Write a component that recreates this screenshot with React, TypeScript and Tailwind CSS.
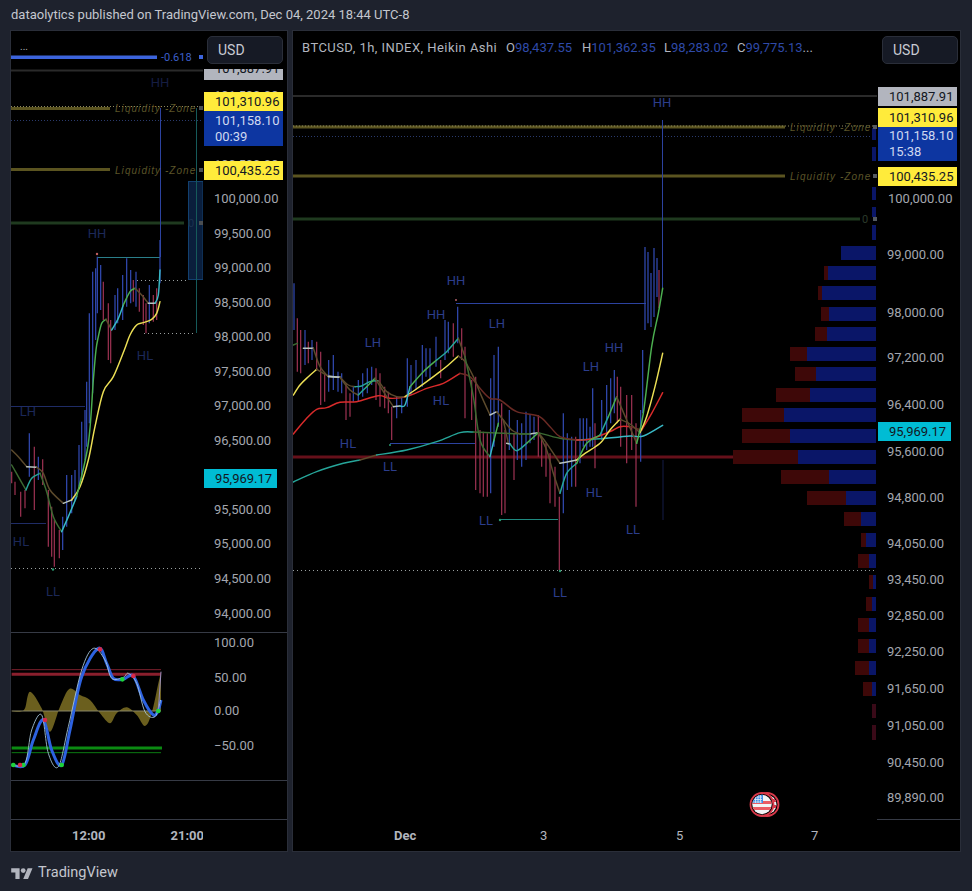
import React from "react";

const B = "#3048ae";
const R = "#97304f";
type Bar = [number, number, number, string];

const rightBars: Bar[] = [
  [12,10,150,B],[22,115,275,R],[32,150,280,R],[45,150,255,B],[55,185,250,R],[66,180,240,B],[80,185,270,R],[92,215,375,R],[104,280,365,R],[116,240,335,B],[130,225,330,B],[144,275,335,B],[155,280,340,B],[168,310,420,R],[180,340,410,R],[190,320,365,B],[205,300,365,B],[218,280,350,B],[232,265,340,B],[245,260,315,B],[258,265,360,R],[270,280,380,R],[284,320,385,R],[295,335,400,R],[305,380,480,R],[320,350,415,B],[335,350,400,B],[352,235,380,B],[363,255,345,B],[378,240,330,B],[397,195,320,B],[408,205,290,B],[420,205,300,B],[438,170,260,B],[452,240,295,R],[465,120,240,B],[475,125,220,B],[490,130,230,R],[503,80,190,B],[515,145,240,R],[525,200,415,R],[545,300,420,R],[557,290,630,R],[570,450,640,R],[580,455,650,R],[592,460,650,R],[602,295,640,B],[612,225,500,B],[625,200,440,B],[635,370,705,R],[645,450,700,R],[658,390,510,B],[672,460,600,R],[682,420,540,B],[695,430,560,B],[708,395,540,B],[720,405,490,B],[732,410,480,B],[745,405,530,R],[755,470,560,R],[768,490,590,R],[780,520,670,R],[795,560,680,R],[808,650,870,R],[820,400,700,B],[832,460,630,B],[845,470,620,B],[857,470,620,R],[870,415,550,B],[880,415,500,B],[890,415,510,B],[900,440,500,B],[908,325,500,B],[915,430,565,R],[935,360,480,B],[950,315,460,B],[962,295,430,B],[973,270,400,B],[982,290,430,R],[992,320,500,R],[1010,345,550,R],[1025,345,510,R],[1038,430,680,R],[1052,390,545,B],[1058,210,400,B],[1065,-99,150,B],[1074,-84,130,B],[1083,-21,141,B],[1092,-96,111,B],[1101,-66,51,B],[1107,-30,84,R],
];

const leftBars: Bar[] = [
  [35,1415,1450,R],[45,1445,1485,R],[62,1475,1550,R],[75,1470,1525,R],[88,1300,1430,B],[103,1340,1530,R],[115,1370,1440,B],[128,1378,1455,R],[145,1470,1640,R],[155,1520,1670,R],[163,1560,1700,R],[178,1590,1675,R],[188,1550,1650,B],[200,1425,1580,B],[215,1425,1540,B],[225,1410,1500,B],[237,1335,1460,B],[245,1265,1440,B],[255,1230,1380,B],[260,1145,1340,B],
  [268,940,1270,B],[278,815,1180,B],[287,805,1020,B],[292,770,940,B],[302,795,930,B],[310,845,960,R],[325,910,1080,R],[332,960,1090,R],[345,885,990,B],[353,865,970,B],[368,825,960,B],[380,775,920,B],[392,810,910,B],[400,840,905,R],[408,815,920,B],[418,865,935,R],[430,885,975,R],[438,910,1000,R],[448,855,970,B],[460,885,965,R],[470,865,960,R],[480,720,850,B],
];

const GREEN = "#4caf50", TEAL = "#26a69a", CYAN = "#39b9c6", YEL = "#ecdf55", BRN = "#5c4a2c", WHT = "#b8c4c0", RED = "#d92b2b", DRED = "#6a2a24", DGRN = "#3c6a32";

type Seg = [string, string];
const rightLines: Seg[] = [
  [TEAL, "10,606 80,575 160,550 210,540"],
  [BRN, "210,540 260,525"],
  [TEAL, "260,525 350,510 440,485 510,458 550,456"],
  [DGRN, "550,456 640,460 720,462"],
  [WHT, "720,462 745,458"],
  [DGRN, "745,458 810,475 860,480"],
  [TEAL, "860,480 950,475"],
  [CYAN, "950,475 1020,468 1060,468 1118,436"],

  [RED, "10,462 50,415 80,388 110,383 150,367 200,365 265,347 300,355 350,350 410,325 460,310 510,280"],
  [DRED, "510,280 540,290 570,325 600,355 630,360 680,395 745,408 780,440 810,470 860,480"],
  [RED, "860,480 900,478 960,455 990,440 1020,440"],
  [DRED, "1020,440 1055,450"],
  [RED, "1055,450 1085,400 1118,338"],

  [YEL, "10,345 30,315 55,290 80,268"],
  [BRN, "80,268 100,280 115,288"],
  [WHT, "115,288 150,292"],
  [BRN, "150,292 175,315 195,320"],
  [TEAL, "195,320 215,318 240,305 265,302"],
  [BRN, "265,302 290,335 320,350 345,350"],
  [YEL, "345,350 375,330 410,305 450,275 475,255 505,228"],
  [BRN, "505,228 525,245 550,290 575,350 600,405"],
  [WHT, "600,405 620,395"],
  [BRN, "620,395 640,420 665,450 690,462"],
  [DGRN, "690,462 720,462"],
  [BRN, "745,458 770,490 810,550"],
  [WHT, "810,550 860,540"],
  [YEL, "860,540 885,520 930,490 960,450 990,418"],
  [BRN, "990,418 1020,432 1050,458"],
  [YEL, "1050,458 1070,410 1095,320 1118,220"],

  [DGRN, "10,195 22,190"],
  [WHT, "40,205 70,205"],
  [BRN, "70,205 90,260 115,290"],
  [WHT, "115,290 150,292"],
  [BRN, "150,292 180,330 205,345"],
  [TEAL, "205,345 230,320"],
  [GREEN, "230,320 255,295"],
  [BRN, "255,295 290,350 310,380"],
  [WHT, "310,380 330,378"],
  [CYAN, "330,378 345,375 360,320"],
  [GREEN, "360,320 400,275 440,240"],
  [TEAL, "440,240 470,215 505,175"],
  [BRN, "505,175 525,230"],
  [DGRN, "525,230 550,350 570,480 600,530"],
  [CYAN, "600,530 612,480"],
  [GREEN, "612,480 625,430"],
  [BRN, "640,420 655,490"],
  [WHT, "650,490 660,492"],
  [TEAL, "660,492 680,512 710,490"],
  [GREEN, "710,490 745,458"],
  [BRN, "745,458 770,510 790,580 810,640"],
  [TEAL, "810,640 830,580 860,550"],
  [GREEN, "860,550 890,490 930,465"],
  [TEAL, "930,465 955,410"],
  [GREEN, "955,410 980,350"],
  [BRN, "980,350 1010,420 1040,490"],
  [GREEN, "1040,490 1060,400 1085,200 1105,100 1118,25"],
];

const leftLines: Seg[] = [
  [BRN, "35,1350 55,1370 80,1400"],
  [WHT, "80,1400 110,1402"],
  [BRN, "110,1402 130,1420 150,1470 190,1510"],
  [WHT, "190,1510 215,1500"],
  [YEL, "215,1500 240,1460 265,1380 285,1280 310,1175 340,1130 373,1050 390,1005 410,975 430,968 455,958 470,940 480,905"],

  [DGRN, "35,1395 55,1430 78,1470"],
  [TEAL, "78,1470 95,1435 120,1420"],
  [DGRN, "120,1420 140,1475 160,1550 185,1595"],
  [CYAN, "185,1595 205,1550 230,1490"],
  [GREEN, "230,1490 265,1330 280,1140 288,1050 295,1010 305,970 318,958"],
  [BRN, "318,958 335,990"],
  [CYAN, "335,990 355,955 370,915"],
  [GREEN, "370,915 390,875 405,865"],
  [BRN, "405,865 425,885 445,910"],
  [WHT, "445,910 465,910"],
  [CYAN, "465,910 475,885 480,810"],
];

// Catmull-Rom curve through a list of "x,y x,y" points, so the moving averages read as curves.
function smooth(points: string): string {
  const p = points.split(" ").map((s) => s.split(",").map(Number));
  let d = `M${p[0][0]} ${p[0][1]}`;
  for (let i = 0; i < p.length - 1; i++) {
    const a = p[Math.max(0, i - 1)], b = p[i], c = p[i + 1], e = p[Math.min(p.length - 1, i + 2)];
    const c1x = b[0] + (c[0] - a[0]) / 6, c1y = b[1] + (c[1] - a[1]) / 6;
    const c2x = c[0] - (e[0] - b[0]) / 6, c2y = c[1] - (e[1] - b[1]) / 6;
    d += `C${c1x} ${c1y} ${c2x} ${c2y} ${c[0]} ${c[1]}`;
  }
  return d;
}

function Bars({ data }: { data: Bar[] }) {
  return (
    <>
      {data.map(([x, t, b, c], i) => (
        <line key={i} x1={x} x2={x} y1={t} y2={b} stroke={c} strokeWidth={3.8} />
      ))}
    </>
  );
}

function Lines({ data }: { data: Seg[] }) {
  return (
    <>
      {data.map(([c, p], i) => (
        <path key={i} d={smooth(p)} fill="none" stroke={c} strokeWidth={4.4} strokeLinejoin="round" strokeLinecap="round" />
      ))}
    </>
  );
}

function ChartLabel({ x, y, t, c = "#2c3d8c" }: { x: number; y: number; t: string; c?: string }) {
  return (
    <text x={x} y={y} textAnchor="middle" dominantBaseline="central" fill={c} fontSize={13}>
      {t}
    </text>
  );
}

function ZoneText({ x, y, c = "#5b5428" }: { x: number; y: number; c?: string }) {
  return (
    <text x={x} y={y} dominantBaseline="central" fill={c} fontSize={10} fontStyle="italic" letterSpacing={1.05} fontFamily="'Liberation Sans', sans-serif">
      Liquidity -Zone
    </text>
  );
}

function Tick({ y, t, x = 10 }: { y: number; t: string; x?: number }) {
  return (
    <div className="absolute whitespace-nowrap text-[13px] leading-[16px] text-[#a3a6ae]" style={{ top: y - 8, left: x }}>
      {t}
    </div>
  );
}

function Badge({ y, h, w = "w-[79px]", bg, fg = "text-[#131722]", lines }: { y: number; h: number; w?: string; bg: string; fg?: string; lines: string[] }) {
  return (
    <div className={`absolute left-[1px] flex flex-col justify-center pl-[11px] text-[13px] leading-[16px] ${w} ${bg} ${fg}`} style={{ top: y, height: h }}>
      {lines.map((l) => (
        <span key={l}>{l}</span>
      ))}
    </div>
  );
}

function UsdButton({ left }: { left: number }) {
  return (
    <div className="absolute top-[5px] flex h-[28px] w-[76px] items-center rounded-[5px] border border-[#2a2e39] bg-[#161a25] pl-[10px] text-[14px] text-[#c8cbd3]" style={{ left }}>
      USD
    </div>
  );
}

const profile: [number, number, number][] = [
  [246, 841, 841],[266, 824, 828],[286, 818, 822],[307, 821, 829],[327, 815, 827],[347, 790, 807],[367, 795, 816],[388, 776, 810],[408, 742, 784],[429, 742, 790],[450, 733, 798],[470, 781, 829],[491, 807, 846],[512, 844, 861],[533, 861, 866],[554, 858, 869],[575, 869, 873],[597, 866, 872],[618, 858, 869],[639, 858, 869],[661, 855, 869],[682, 863, 872],
];

function RightPlot() {
  return (
    <svg className="block h-[788px] w-[584px]" viewBox="293 31 584 788" fontFamily="Roboto, sans-serif">
      <line x1={293} x2={877} y1={96} y2={96} stroke="#2a2a2a" strokeWidth={2} />
      <line x1={293} x2={785} y1={127} y2={127} stroke="#5b5420" strokeWidth={3} />
      <line x1={293} x2={877} y1={126} y2={126} stroke="#8e8a60" strokeWidth={1} strokeDasharray="1 2" />
      <line x1={293} x2={877} y1={136.5} y2={136.5} stroke="#2a3a6c" strokeWidth={1} strokeDasharray="1 2" />
      <line x1={293} x2={785} y1={176} y2={176} stroke="#5b5420" strokeWidth={3} />
      <line x1={293} x2={860} y1={219} y2={219} stroke="#1f3a1f" strokeWidth={3} />
      <line x1={293} x2={733} y1={457} y2={457} stroke="#66101a" strokeWidth={3} />
      <line x1={293} x2={877} y1={570.5} y2={570.5} stroke="#9aa0a0" strokeWidth={1} strokeDasharray="1 3" />

      <line x1={456} x2={646} y1={303.5} y2={303.5} stroke="#2c429f" strokeWidth={1} />
      <line x1={390} x2={475} y1={443.5} y2={443.5} stroke="#2c429f" strokeWidth={1} />
      <line x1={500} x2={558} y1={519.5} y2={519.5} stroke="#1f8a80" strokeWidth={1} />
      <line x1={662.5} x2={662.5} y1={120} y2={288} stroke="#2c429f" strokeWidth={1} />
      <line x1={663} x2={663} y1={460} y2={520} stroke="#141c48" strokeWidth={1} />

      <ZoneText x={790} y={127} />
      <ZoneText x={790} y={176} />
      <text x={865} y={219} textAnchor="middle" dominantBaseline="central" fill="#2b3a2b" fontSize={11}>0</text>

      {[[128,140],[147,161],[187,200],[207,217],[225,240]].map(([a, b]) => (
        <rect key={a} x={872} y={a} width={4} height={b - a} fill="#0a1668" />
      ))}
      {[127, 176, 219].map((y) => (
        <rect key={y} x={873} y={y - 2} width={4} height={4} fill="#555a60" />
      ))}

      {profile.map(([y, r, s]) => (
        <g key={y}>
          <rect x={r} y={y} width={s - r} height={14} fill="#3e0808" />
          <rect x={s} y={y} width={876 - s} height={14} fill="#0a1668" />
        </g>
      ))}
      <rect x={872} y={704} width={4} height={14} fill="#3a0a18" />
      <rect x={872} y={725} width={4} height={15} fill="#3a0a18" />

      <g transform="translate(290 280) scale(0.33333)">
        <Bars data={rightBars} />
        <Lines data={rightLines} />
      </g>

      <circle cx={456} cy={300} r={1} fill="#b0606a" />
      <circle cx={390} cy={445} r={1} fill="#2a9a70" />
      <circle cx={500} cy={520} r={1.2} fill="#2a9a70" />
      <circle cx={560} cy={571} r={1.2} fill="#2a9a70" />

      <ChartLabel x={662} y={102} t="HH" />
      <ChartLabel x={456} y={280} t="HH" />
      <ChartLabel x={436} y={314} t="HH" />
      <ChartLabel x={497} y={323} t="LH" />
      <ChartLabel x={373} y={342} t="LH" />
      <ChartLabel x={591} y={366} t="LH" />
      <ChartLabel x={614} y={347} t="HH" />
      <ChartLabel x={441} y={400} t="HL" />
      <ChartLabel x={348} y={443} t="HL" />
      <ChartLabel x={390} y={466} t="LL" />
      <ChartLabel x={594} y={492} t="HL" />
      <ChartLabel x={486} y={520} t="LL" />
      <ChartLabel x={633} y={529} t="LL" />
      <ChartLabel x={560} y={592} t="LL" />

      <g>
        <circle cx={767} cy={804.5} r={11.5} fill="#000" stroke="#d9394a" strokeWidth={1.8} />
        <clipPath id="flagBack"><circle cx={767} cy={804.5} r={9.5} /></clipPath>
        <g clipPath="url(#flagBack)">
          <rect x={770} y={795} width={7} height={19} fill="#eef0f2" />
          <rect x={772} y={799} width={5} height={3} fill="#d9394a" />
          <rect x={772} y={805} width={5} height={3} fill="#d9394a" />
        </g>
        <circle cx={762} cy={804.5} r={11.5} fill="#000" stroke="#d9394a" strokeWidth={1.8} />
        <clipPath id="flagClip"><circle cx={762} cy={804.5} r={9.7} /></clipPath>
        <g clipPath="url(#flagClip)">
          <rect x={752} y={794} width={20} height={21} fill="#f2f4f6" />
          <rect x={752} y={801} width={20} height={3} fill="#ea5b64" />
          <rect x={752} y={807} width={20} height={3} fill="#ea5b64" />
          <rect x={752} y={794} width={11} height={9} fill="#3d8ee6" />
          <path d="M753 797h9M753 799.5h9M753 802h9M755.5 795v8M758 795v8M760.5 795v8" stroke="#dfeaf6" strokeWidth={0.8} />
        </g>
      </g>
    </svg>
  );
}

function LeftPlot() {
  return (
    <svg className="block h-[601px] w-[192px]" viewBox="11 31 192 601" fontFamily="Roboto, sans-serif">
      <rect x={11} y={55.5} width={146} height={3.5} fill="#3c64dc" />
      <text x={161} y={57} dominantBaseline="central" fill="#3c5fc8" fontSize={11}>-0.618</text>
      <rect x={199} y={55} width={4} height={4} fill="#3c64dc" />
      <text x={20} y={50} fill="#b0b3ba" fontSize={10}>...</text>

      <line x1={11} x2={203} y1={70.5} y2={70.5} stroke="#2a2a2a" strokeWidth={2} />
      <line x1={11} x2={110} y1={108.5} y2={108.5} stroke="#5b5420" strokeWidth={3} />
      <line x1={11} x2={203} y1={106.5} y2={106.5} stroke="#8e8a60" strokeWidth={1} strokeDasharray="1 2" />
      <line x1={11} x2={203} y1={120.5} y2={120.5} stroke="#2a3a6c" strokeWidth={1} strokeDasharray="1 2" />
      <line x1={11} x2={110} y1={169.5} y2={169.5} stroke="#5b5420" strokeWidth={3} />
      <line x1={11} x2={184} y1={223} y2={223} stroke="#1f3a1f" strokeWidth={3} />
      <line x1={11} x2={203} y1={568.5} y2={568.5} stroke="#9aa0a0" strokeWidth={1} strokeDasharray="1 3" />

      <rect x={188.5} y={181.5} width={14.5} height={98} fill="#0a1e3c" stroke="#12406f" strokeWidth={1} />
      <line x1={196.5} x2={196.5} y1={108} y2={333} stroke="#155a5a" strokeWidth={1} />
      <line x1={144} x2={196} y1={333.5} y2={333.5} stroke="#9aa0a0" strokeDasharray="1 3" />
      <line x1={137} x2={188} y1={280.5} y2={280.5} stroke="#9aa0a0" strokeDasharray="1 3" />
      <line x1={160.5} x2={160.5} y1={108} y2={257} stroke="#2c429f" strokeWidth={1} />
      <line x1={97} x2={160} y1={257.5} y2={257.5} stroke="#2a7f8a" strokeWidth={1} />
      <line x1={11} x2={85} y1={406.5} y2={406.5} stroke="#1f2c66" strokeWidth={1} />
      <line x1={11} x2={46} y1={523.5} y2={523.5} stroke="#1f2c66" strokeWidth={1} />

      <ZoneText x={115} y={108} />
      <ZoneText x={115} y={170} />
      <text x={191} y={223} textAnchor="middle" dominantBaseline="central" fill="#1c3350" fontSize={11}>0</text>
      {[108, 170, 223].map((y) => (
        <rect key={y} x={199} y={y - 2} width={4} height={4} fill="#4a4e52" />
      ))}

      <g transform="scale(0.33333)">
        <Bars data={leftBars} />
        <Lines data={leftLines} />
      </g>

      <circle cx={97} cy={254} r={1.2} fill="#c06060" />
      <circle cx={53} cy={569.5} r={1.2} fill="#2a9a70" />

      <ChartLabel x={160} y={82} t="HH" c="#151d42" />
      <ChartLabel x={97} y={233} t="HH" c="#1c2858" />
      <ChartLabel x={28} y={411} t="LH" c="#1c2858" />
      <ChartLabel x={21} y={541} t="HL" c="#1c2858" />
      <ChartLabel x={53} y={591} t="LL" c="#1c2858" />
      <ChartLabel x={145} y={355} t="HL" c="#1c2858" />
    </svg>
  );
}

function OscPlot() {
  return (
    <svg className="block h-[148px] w-[192px]" viewBox="11 633 192 148">
      <g transform="translate(0 600) scale(0.33333)">
        <path d={smooth("35,333 60,335 75,325 90,275 125,325 150,395 180,320 208,267 240,285 270,300 300,340 330,370 350,340 380,322 410,345 435,378 455,340 475,250 483,215") + "L483 333Z"} fill="#6b5f1e" />
        <line x1={35} x2={483} y1={333} y2={333} stroke="#8a8868" strokeWidth={3} />
        <line x1={35} x2={483} y1={209} y2={209} stroke="#7c1f2c" strokeWidth={3} />
        <line x1={35} x2={483} y1={223} y2={223} stroke="#8a1f2d" strokeWidth={9} />
        <line x1={35} x2={486} y1={444} y2={444} stroke="#0b8a12" strokeWidth={9} />
        <line x1={35} x2={483} y1={458} y2={458} stroke="#0b7a12" strokeWidth={3} />
        <path d={smooth("35,495 75,495 100,420 130,360 155,450 185,495 210,390 245,230 295,145 320,190 340,235 370,238 400,228 430,300 460,345 475,330 483,300")} fill="none" stroke="#2d62e0" strokeWidth={9} strokeLinejoin="round" />
        <path d={smooth("35,495 75,490 95,390 125,345 145,460 175,500 205,380 245,210 280,145 315,180 335,235 370,232 385,220 410,250 435,335 465,350 482,300")} fill="none" stroke="#a8c8dc" strokeWidth={2.6} strokeLinejoin="round" />
        <line x1={475} x2={483} y1={330} y2={215} stroke="#9a8ec0" strokeWidth={3} />
        {[[40,495],[70,495],[185,495],[367,238],[475,333]].map(([x, y]) => (
          <circle key={x} cx={x} cy={y} r={7} fill="#1ed33a" />
        ))}
        {[[60,495],[135,360],[300,148],[400,228]].map(([x, y]) => (
          <circle key={x} cx={x} cy={y} r={7} fill="#d6294a" />
        ))}
      </g>
    </svg>
  );
}

const leftTicks: [number, string][] = [
  [199,"100,000.00"],[234,"99,500.00"],[268,"99,000.00"],[303,"98,500.00"],[337,"98,000.00"],[372,"97,500.00"],[406,"97,000.00"],[441,"96,500.00"],[510,"95,500.00"],[544,"95,000.00"],[579,"94,500.00"],[614,"94,000.00"],
];
const rightTicks: [number, string][] = [
  [199,"100,000.00"],[255,"99,000.00"],[313,"98,000.00"],[358,"97,200.00"],[405,"96,400.00"],[452,"95,600.00"],[498,"94,800.00"],[544,"94,050.00"],[580,"93,450.00"],[616,"92,850.00"],[652,"92,250.00"],[689,"91,650.00"],[726,"91,050.00"],[763,"90,450.00"],[798,"89,890.00"],
];

export default function App() {
  return (
    <div className="flex h-[891px] w-[972px] flex-col bg-[#1e222d] font-['Roboto',sans-serif]">
      <div className="flex h-[30px] items-center pl-[11px] text-[13px] text-[#c4c7cf]">
        dataolytics published on TradingView.com, Dec 04, 2024 18:44 UTC-8
      </div>

      <div className="flex h-[822px] gap-[4px] pl-[10px]">
        {/* left chart */}
        <div className="flex w-[278px] flex-col border border-[#2a2e39] bg-black">
          <div className="flex h-[601px]">
            <LeftPlot />
            <div className="relative w-[84px] overflow-hidden">
              <Tick y={96 - 31} x={11} t="101,500.00" />
              <Tick y={165 - 31} x={11} t="100,500.00" />
              {leftTicks.map(([y, t]) => (
                <Tick key={t} y={y - 31} x={11} t={t} />
              ))}
              <UsdButton left={4} />
              <div className="absolute left-[1px] top-[38px] h-[11px] w-[79px] overflow-hidden bg-[#b2b5be] pl-[11px] text-[13px] leading-[16px] text-[#131722]">
                <div className="-mt-[8px]">101,887.91</div>
              </div>
              <Badge y={61} h={19} bg="bg-[#ffeb3b]" lines={["101,310.96"]} />
              <Badge y={80} h={35} bg="bg-[#0d36a1]" fg="text-[#cfd8f0]" lines={["101,158.10", "00:39"]} />
              <Badge y={130} h={19} bg="bg-[#ffeb3b]" lines={["100,435.25"]} />
              <Badge y={438} h={19} w="w-[73px]" bg="bg-[#00bcd4]" lines={["95,969.17"]} />
            </div>
          </div>
          <div className="flex h-[148px] border-t border-[#363a45]">
            <OscPlot />
            <div className="relative w-[84px]">
              <Tick y={10} x={11} t="100.00" />
              <Tick y={45} x={11} t="50.00" />
              <Tick y={78} x={11} t="0.00" />
              <Tick y={113} x={11} t="−50.00" />
            </div>
          </div>
          <div className="h-[39px] border-t border-[#363a45]" />
          <div className="h-[32px] border-t border-[#363a45] text-[13px] font-bold text-[#b2b5be]">
            <div className="flex h-full w-[192px] items-center overflow-hidden whitespace-nowrap">
              <span className="ml-[61px]">12:00</span>
              <span className="ml-[65px]">21:00</span>
            </div>
          </div>
        </div>

        {/* right chart */}
        <div className="flex w-[669px] flex-col border border-[#2a2e39] bg-black">
          <div className="relative flex h-[788px]">
            <RightPlot />
            <div className="relative w-[83px] overflow-hidden">
              <Tick y={61} x={14} t="102,000.00" />
              {rightTicks.map(([y, t]) => (
                <Tick key={t} y={y - 31} x={t === "100,000.00" ? 11 : 10} t={t} />
              ))}
              <UsdButton left={5} />
              <Badge y={56} h={19} bg="bg-[#b2b5be]" lines={["101,887.91"]} />
              <Badge y={77} h={19} bg="bg-[#ffeb3b]" lines={["101,310.96"]} />
              <Badge y={96} h={34} bg="bg-[#0d36a1]" fg="text-[#cfd8f0]" lines={["101,158.10", "15:38"]} />
              <Badge y={136} h={19} bg="bg-[#ffeb3b]" lines={["100,435.25"]} />
              <Badge y={391} h={19} w="w-[73px]" bg="bg-[#00bcd4]" lines={["95,969.17"]} />
            </div>
            <div className="absolute left-[9px] top-[9px] flex whitespace-nowrap text-[13px] leading-[16px] text-[#b2b5be]">
              <span className="w-[204px] tracking-[0.45px]">BTCUSD, 1h, INDEX, Heikin Ashi</span>
              <span className="w-[76px]">O<span className="text-[#2f4aa8]">98,437.55</span></span>
              <span className="w-[82px]">H<span className="text-[#2f4aa8]">101,362.35</span></span>
              <span className="w-[73px]">L<span className="text-[#2f4aa8]">98,283.02</span></span>
              <span>C<span className="text-[#2f4aa8]">99,775.13</span>...</span>
            </div>
          </div>
          <div className="flex h-[32px]">
            <div className="relative h-full w-[584px] text-[13px] text-[#b2b5be]">
              <span className="absolute left-[101px] top-[7px] font-bold">Dec</span>
              <span className="absolute left-[247px] top-[7px]">3</span>
              <span className="absolute left-[383px] top-[7px]">5</span>
              <span className="absolute left-[518px] top-[7px]">7</span>
            </div>
            <div className="h-full flex-1 border-t border-[#363a45]" />
          </div>
        </div>
      </div>

      <div className="flex flex-1 items-center gap-[5px] pl-[11px] pt-[2px]">
        <svg width="22" height="12" viewBox="0 0 36 20" fill="#b2b5be">
          <path d="M14 20H7V9H0V2h14v18zM28 20h-8l7.5-18h8L28 20z" />
          <circle cx="20" cy="6" r="4" />
        </svg>
        <span className="text-[14.5px] text-[#c4c7cf]">TradingView</span>
      </div>
    </div>
  );
}
